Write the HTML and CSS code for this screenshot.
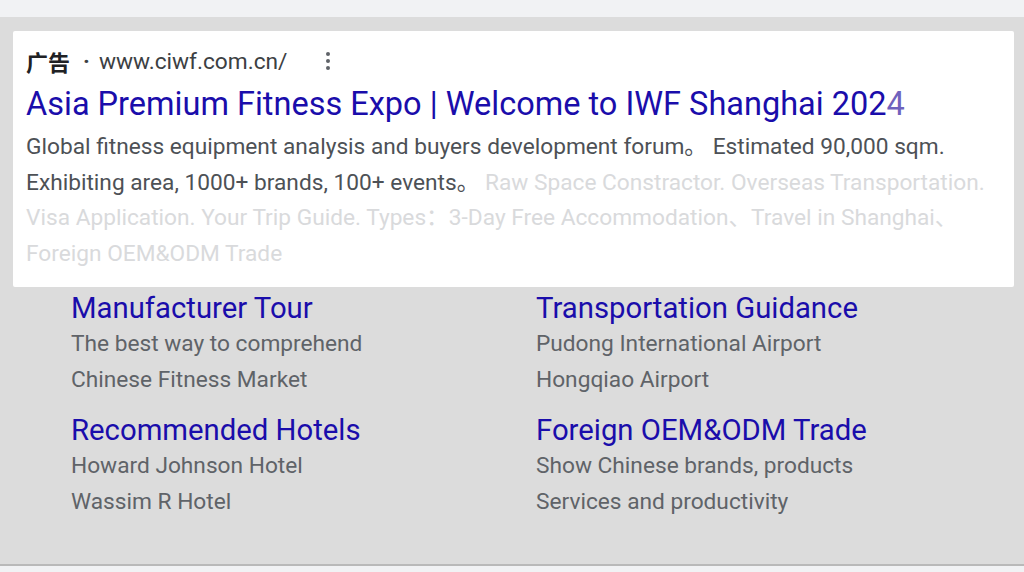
FILE: index.html
```html
<!DOCTYPE html>
<html lang="en">
<head>
<meta charset="utf-8">
<title>Ad</title>
<link rel="stylesheet" href="styles.css">
</head>
<body>
<div class="panel">
  <div class="card">
    <div class="head">
      <span class="label">广告</span>
      <span class="dot">·</span>
      <span class="url">www.ciwf.com.cn/</span>
      <span class="kebab"><i></i><i></i><i></i></span>
    </div>
    <div class="title">Asia Premium Fitness Expo | Welcome to IWF Shanghai 202<span class="fade">4</span></div>
    <p class="desc">Global fitness equipment analysis and buyers development forum。 Estimated 90,000 sqm.<br>Exhibiting area, 1000+ brands, 100+ events。 <span class="light">Raw Space Constractor. Overseas Transportation.<br>Visa Application. Your Trip Guide. Types：3-Day Free Accommodation、Travel in Shanghai、<br>Foreign OEM&amp;ODM Trade</span></p>
  </div>
  <div class="links">
    <div class="link">
      <div class="ltitle">Manufacturer Tour</div>
      <div class="ldesc">The best way to comprehend</div>
      <div class="ldesc">Chinese Fitness Market</div>
    </div>
    <div class="link">
      <div class="ltitle">Transportation Guidance</div>
      <div class="ldesc">Pudong International Airport</div>
      <div class="ldesc">Hongqiao Airport</div>
    </div>
    <div class="link">
      <div class="ltitle">Recommended Hotels</div>
      <div class="ldesc">Howard Johnson Hotel</div>
      <div class="ldesc">Wassim R Hotel</div>
    </div>
    <div class="link">
      <div class="ltitle">Foreign OEM&amp;ODM Trade</div>
      <div class="ldesc">Show Chinese brands, products</div>
      <div class="ldesc">Services and productivity</div>
    </div>
  </div>
</div>
</body>
</html>
```
FILE: styles.css
```css
html, body {
  margin: 0;
  padding: 0;
  background: #f1f2f4;
  font-family: Roboto, "Noto Sans CJK SC", sans-serif;
}
.panel {
  margin-top: 17px;
  height: 549px;
  box-sizing: border-box;
  background: #dcdcdc;
  border-bottom: 2px solid #b9b9b9;
  padding: 14px 10px 0 13px;
}
.card {
  background: #ffffff;
  height: 256px;
  box-sizing: border-box;
  padding: 15px 13px 0 13px;
  border-radius: 2px;
}
.head {
  display: flex;
  align-items: center;
  height: 30px;
  font-size: 22.7px;
  color: #3c4043;
}
.label {
  font-weight: 700;
  color: #202124;
  font-family: "Noto Sans CJK SC", sans-serif;
  font-size: 22px;
}
.dot {
  margin: 0 9px 0 13px;
  font-weight: 700;
}
.url {
  color: #3c4043;
}
.kebab {
  display: flex;
  flex-direction: column;
  gap: 3px;
  margin-left: 39px;
}
.kebab i {
  width: 4px;
  height: 4px;
  border-radius: 50%;
  background: #5f6368;
}
.title {
  margin-top: 8px;
  font-size: 32.5px;
  line-height: 40px;
  color: #1a0dab;
  white-space: nowrap;
}
.fade {
  color: #6f62bd;
}
.desc {
  margin: 5px 0 0 0;
  font-size: 22.7px;
  line-height: 35.7px;
  color: #4d5156;
  white-space: nowrap;
}
.light {
  color: #d9dadc;
}
.links {
  display: grid;
  grid-template-columns: 465px 465px;
  padding: 3px 0 0 58px;
  row-gap: 14px;
}
.ltitle {
  font-size: 29.3px;
  line-height: 36px;
  color: #1a0dab;
}
.ldesc {
  font-size: 22.7px;
  line-height: 36px;
  color: #5f6368;
}
```
